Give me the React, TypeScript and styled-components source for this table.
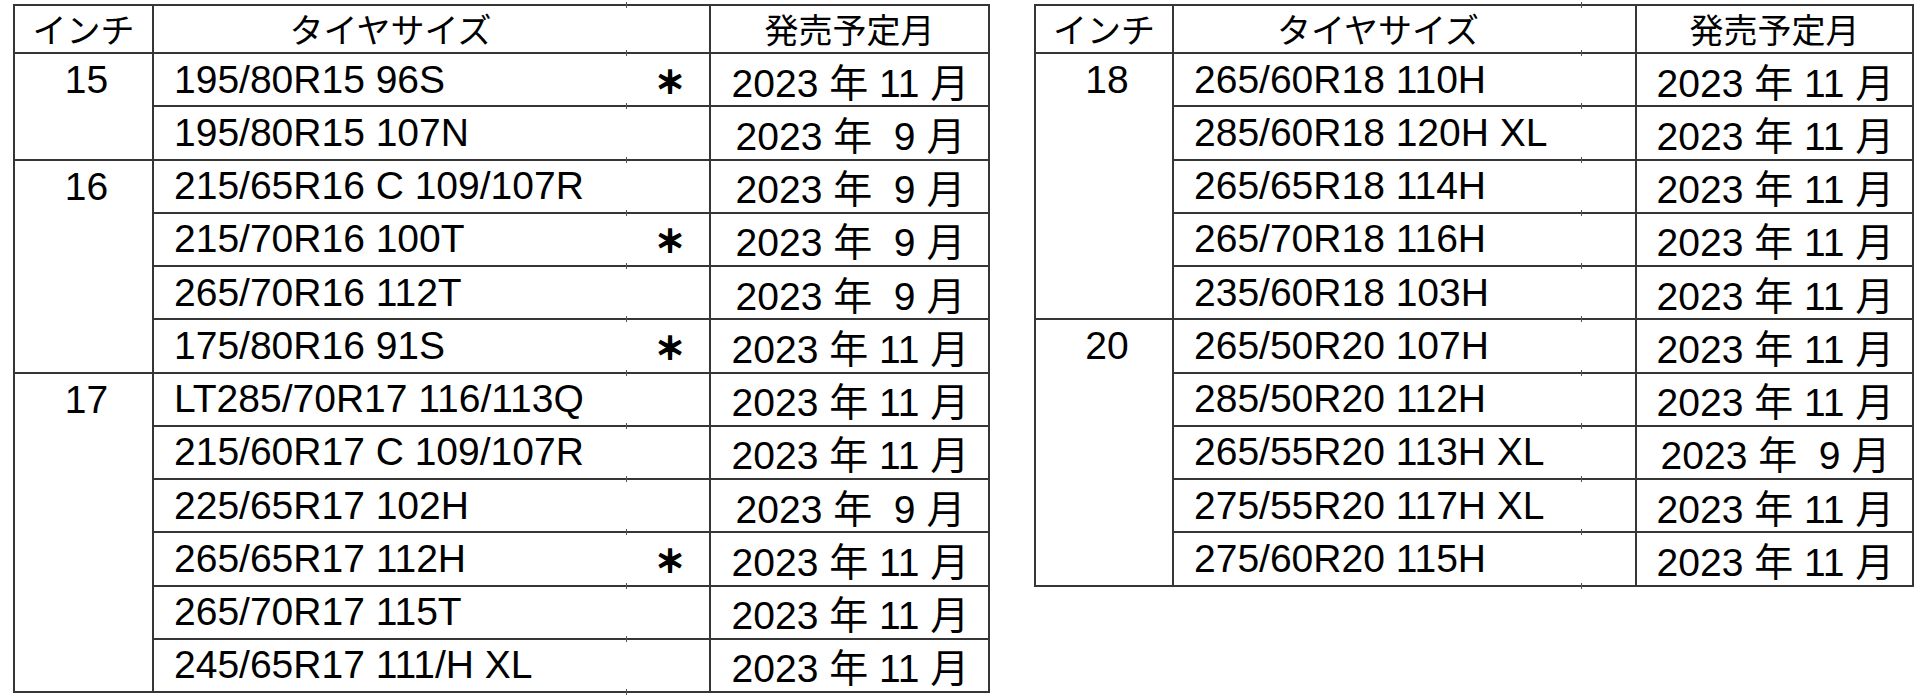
import React from 'react';
import styled, { createGlobalStyle } from 'styled-components';

interface TireRow {
  size: string;
  mark?: boolean;
  month: string;
}

interface InchGroup {
  inch: string;
  rows: TireRow[];
}

const NOV = '2023 年 11 月';
const SEP = '2023 年  9 月';

const leftGroups: InchGroup[] = [
  {
    inch: '15',
    rows: [
      { size: '195/80R15 96S', mark: true, month: NOV },
      { size: '195/80R15 107N', month: SEP },
    ],
  },
  {
    inch: '16',
    rows: [
      { size: '215/65R16 C 109/107R', month: SEP },
      { size: '215/70R16 100T', mark: true, month: SEP },
      { size: '265/70R16 112T', month: SEP },
      { size: '175/80R16 91S', mark: true, month: NOV },
    ],
  },
  {
    inch: '17',
    rows: [
      { size: 'LT285/70R17 116/113Q', month: NOV },
      { size: '215/60R17 C 109/107R', month: NOV },
      { size: '225/65R17 102H', month: SEP },
      { size: '265/65R17 112H', mark: true, month: NOV },
      { size: '265/70R17 115T', month: NOV },
      { size: '245/65R17 111/H XL', month: NOV },
    ],
  },
];

const rightGroups: InchGroup[] = [
  {
    inch: '18',
    rows: [
      { size: '265/60R18 110H', month: NOV },
      { size: '285/60R18 120H XL', month: NOV },
      { size: '265/65R18 114H', month: NOV },
      { size: '265/70R18 116H', month: NOV },
      { size: '235/60R18 103H', month: NOV },
    ],
  },
  {
    inch: '20',
    rows: [
      { size: '265/50R20 107H', month: NOV },
      { size: '285/50R20 112H', month: NOV },
      { size: '265/55R20 113H XL', month: SEP },
      { size: '275/55R20 117H XL', month: NOV },
      { size: '275/60R20 115H', month: NOV },
    ],
  },
];

const LINE = '#363636';

const GlobalStyle = createGlobalStyle`
  html, body {
    margin: 0;
    padding: 0;
    background: #ffffff;
  }
  body {
    font-family: "Liberation Sans", Arial, "Noto Sans CJK JP", sans-serif;
    color: #000000;
  }
`;

const Page = styled.div`
  display: flex;
  align-items: flex-start;
  gap: 44px;
  width: 1920px;
  height: 698px;
  box-sizing: border-box;
  padding: 4px 0 0 13px;
  overflow: hidden;
`;

const Grid = styled.div<{ $cols: number[]; $rows: number }>`
  display: grid;
  grid-template-columns: ${p => p.$cols.map(c => `${c}px`).join(' ')};
  grid-template-rows: 48px repeat(${p => p.$rows}, 53.25px);
  border-left: 2px solid ${LINE};
  border-top: 2px solid ${LINE};
`;

const Cell = styled.div<{ $open?: boolean }>`
  box-sizing: border-box;
  position: relative;
  display: flex;
  align-items: center;
  border-bottom: 2px solid ${LINE};
  border-right: ${p => (p.$open ? 'none' : `2px solid ${LINE}`)};
  font-size: 39px;
  white-space: pre;
`;

const HeadCell = styled(Cell)`
  justify-content: center;
  font-family: "Noto Sans CJK JP", sans-serif;
  font-size: 34px;
  padding-bottom: 2px;
`;

const InchCell = styled(Cell)<{ $span: number }>`
  grid-column: 1;
  grid-row: span ${p => p.$span};
  align-items: flex-start;
  justify-content: center;
  line-height: 51px;
  padding-left: 6px;
`;

const SizeCell = styled(Cell)<{ $indent: number }>`
  padding-left: ${p => p.$indent}px;
`;

const Tick = styled.span<{ $top?: boolean }>`
  position: absolute;
  left: -1px;
  width: 1px;
  height: 6px;
  background: #555555;
  ${p => (p.$top ? 'top: -4px;' : 'bottom: -4px;')}
`;

const MarkCell = styled(Cell)`
  justify-content: center;
  font-family: "Noto Sans CJK JP", sans-serif;
  font-size: 30px;
  font-weight: 700;
  -webkit-text-stroke: 1.6px #000000;
  padding-left: 4px;
`;

const MonthCell = styled(Cell)`
  justify-content: center;
  padding-left: 2px;
`;

interface TireTableProps {
  cols: number[];
  indent: number;
  groups: InchGroup[];
}

function TireTable({ cols, indent, groups }: TireTableProps) {
  const rowCount = groups.reduce((n, g) => n + g.rows.length, 0);
  return (
    <Grid $cols={cols} $rows={rowCount}>
      <HeadCell>インチ</HeadCell>
      <HeadCell $open>タイヤサイズ</HeadCell>
      <HeadCell>
        <Tick $top />
        <Tick />
      </HeadCell>
      <HeadCell>発売予定月</HeadCell>
      {groups.map(group => (
        <React.Fragment key={group.inch}>
          <InchCell $span={group.rows.length}>{group.inch}</InchCell>
          {group.rows.map(row => (
            <React.Fragment key={row.size}>
              <SizeCell $open $indent={indent}>
                {row.size}
              </SizeCell>
              <MarkCell>
                {row.mark ? '＊' : ''}
                <Tick />
              </MarkCell>
              <MonthCell>{row.month}</MonthCell>
            </React.Fragment>
          ))}
        </React.Fragment>
      ))}
    </Grid>
  );
}

export default function App() {
  return (
    <>
      <GlobalStyle />
      <Page>
        <TireTable cols={[139, 473, 84, 279]} indent={20} groups={leftGroups} />
        <TireTable cols={[138, 408, 55, 277]} indent={20} groups={rightGroups} />
      </Page>
    </>
  );
}
